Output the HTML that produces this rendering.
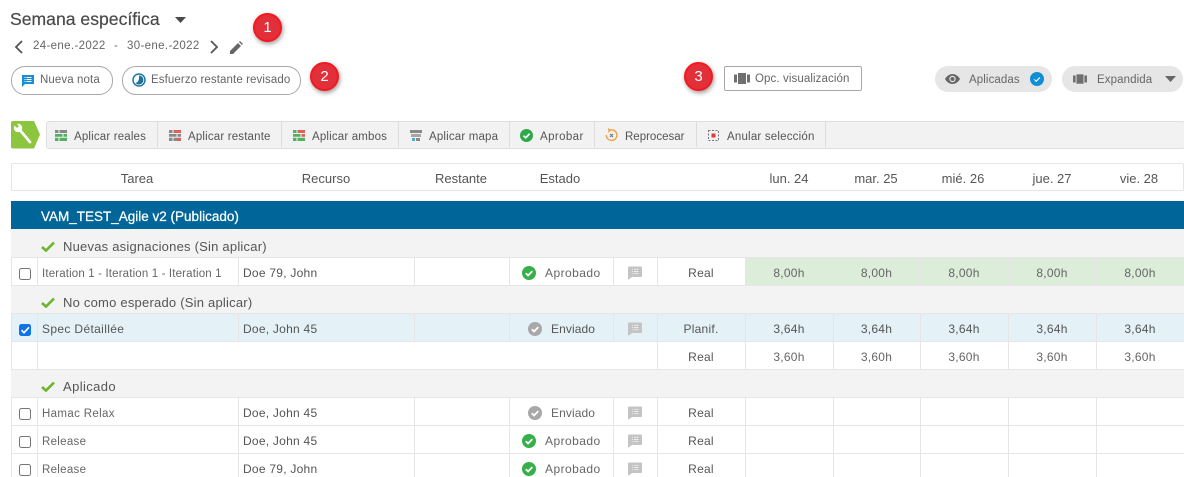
<!DOCTYPE html>
<html><head><meta charset="utf-8"><style>
html,body{margin:0;padding:0;background:#fff}
#p{position:relative;width:1184px;height:477px;overflow:hidden;font-family:"Liberation Sans",sans-serif;font-size:12px;color:#555;background:#fff}
#p div,#p svg{position:absolute}
.t{white-space:nowrap;line-height:14px}
.c{white-space:nowrap;line-height:14px;text-align:center}
.v{width:1px;background:#e6e6e6}
.h{height:1px;background:#e6e6e6;left:11px;width:1173px}
.g{left:11px;width:1173px;background:#f3f3f3}
.b{width:29px;height:29px;border-radius:50%;background:#e2303a;border:2px solid #f5181e;box-sizing:border-box;color:#fff;font-size:15px;line-height:25px;text-align:center;box-shadow:1px 2px 5px rgba(0,0,0,.4)}
.cb{left:19px;width:10px;height:10px;border:1px solid #767676;border-radius:2.5px;background:#fff}
.sep{top:122px;width:1px;height:25px;background:#dcdcdc}
.tb{top:130px;font-size:11.5px;letter-spacing:.17px;white-space:nowrap;line-height:14px}
.top{font-size:11.5px;color:#666;letter-spacing:.1px;white-space:nowrap;line-height:14px}
.hd{top:172px;width:100px;font-size:13px;text-align:center;white-space:nowrap;line-height:14px}
.gp{left:63px;font-size:13px;letter-spacing:.22px;white-space:nowrap;line-height:14px}
.task{left:42px;font-size:11.5px;letter-spacing:.15px;color:#666;white-space:nowrap;line-height:14px}
.res{left:243px;font-size:12px;letter-spacing:.25px;white-space:nowrap;line-height:14px;margin-top:-1px}
.st{font-size:12px;letter-spacing:.45px;color:#666;white-space:nowrap;line-height:14px;margin-top:-1px}
.n{font-size:12px;letter-spacing:.25px;text-align:center;white-space:nowrap;line-height:14px;margin-top:-1px}
.m{color:#666}
</style></head><body><div id="p">
<svg width="0" height="0" style="left:0;top:0"><defs>
<symbol id="ok" viewBox="0 0 14 14"><circle cx="7" cy="7" r="7"/><path d="M3.8 7.2l2.3 2.3 4.2-4.4" fill="none" stroke="#fff" stroke-width="1.8"/></symbol>
<symbol id="note" viewBox="0 0 14 14"><path d="M1 .5h12a1 1 0 0 1 1 1v8.500a1 1 0 0 1-1 1H4L1 13.500a1 1 0 0 1-1-1V1.500a1 1 0 0 1 1-1z" fill="#c4c4c4"/><path d="M4 3.300h1M6 3.300h4.500M4 5.500h1M6 5.500h4.500M4 7.700h1M6 7.700h4.500" stroke="#ececec" stroke-width=".9"/></symbol>
<symbol id="tick" viewBox="0 0 14 11"><path d="M1 6l4 3.600L13 1.500" fill="none" stroke="#6eb52f" stroke-width="2.600"/></symbol>
<symbol id="bars" viewBox="0 0 16 11"><rect x="0" y="1.500" width="3" height="8" fill="#707070"/><rect x="4" y="0" width="8" height="11" fill="#707070"/><rect x="13" y="1.500" width="3" height="8" fill="#707070"/></symbol>
</defs></svg>

<div class="t" style="left:10px;top:9px;font-size:17.6px;line-height:20px;color:#4a4a4a;-webkit-text-stroke:.2px #4a4a4a">Semana específica</div>
<svg style="left:175px;top:17px" width="11" height="6"><path d="M0 0h11L5.500 6z" fill="#4a4a4a"/></svg>
<svg style="left:14px;top:40px" width="10" height="14"><path d="M8 1L2 7l6 6" fill="none" stroke="#555" stroke-width="1.800"/></svg>
<div class="top" style="left:33px;top:39px;letter-spacing:.35px">24-ene.-2022</div>
<div class="top" style="left:114px;top:39px">-</div>
<div class="top" style="left:127px;top:39px;letter-spacing:.35px">30-ene.-2022</div>
<svg style="left:209px;top:40px" width="10" height="14"><path d="M2 1l6 6-6 6" fill="none" stroke="#555" stroke-width="1.800"/></svg>
<svg style="left:230px;top:41px" width="13" height="13" viewBox="0 0 13 13"><path d="M0 13V10L8 2l3 3-8 8zM9 1l1-1 3 3-1 1z" fill="#666"/></svg>

<div class="b" style="left:253px;top:13px">1</div>
<div class="b" style="left:310px;top:62px">2</div>
<div class="b" style="left:684px;top:62px">3</div>

<div style="left:11px;top:66px;width:100px;height:27px;border:1px solid #a9a9a9;border-radius:14px"></div>
<svg style="left:22px;top:75px" width="12" height="12" viewBox="0 0 12 12"><path d="M0 0h12v9H3l-3 3z" fill="#1b8fd2"/><path d="M2.500 2.500h1M4.500 2.500h5M2.500 4.500h1M4.500 4.500h5M2.500 6.500h1M4.500 6.500h5" stroke="#fff"/></svg>
<div class="top" style="left:40px;top:73px">Nueva nota</div>

<div style="left:122px;top:66px;width:177px;height:27px;border:1px solid #a9a9a9;border-radius:14px"></div>
<svg style="left:132px;top:73px" width="14" height="14" viewBox="0 0 14 14"><circle cx="7" cy="7" r="6" fill="#fff" stroke="#1f78a8" stroke-width="1.500"/><path d="M7 2.500A4.500 4.500 0 1 1 3.500 10C6 9.500 7.500 7 7 2.500z" fill="#1f6f9e"/></svg>
<div class="top" style="left:151px;top:73px">Esfuerzo restante revisado</div>

<div style="left:724px;top:66px;width:136px;height:23px;border:1px solid #a9a9a9;border-radius:2px"></div>
<svg style="left:734px;top:73px" width="16" height="11"><use href="#bars"/></svg>
<div class="top" style="left:755px;top:72px">Opc. visualización</div>

<div style="left:935px;top:66px;width:117px;height:26px;background:#e6e6e6;border-radius:13px"></div>
<svg style="left:945px;top:74px" width="15" height="10" viewBox="0 0 15 10"><path d="M0 5C2 1.500 5 0 7.500 0S13 1.500 15 5c-2 3.500-5 5-7.500 5S2 8.500 0 5z" fill="#666"/><circle cx="7.500" cy="5" r="3.200" fill="#e6e6e6"/><circle cx="7.500" cy="5" r="2" fill="#666"/></svg>
<div class="top" style="left:969px;top:73px">Aplicadas</div>
<svg style="left:1030px;top:72px" width="14" height="14" viewBox="0 0 14 14"><circle cx="7" cy="7" r="7" fill="#0f8fd3"/><path d="M4.300 7.500l2 1.800 3.500-3.800" fill="none" stroke="#fff" stroke-width="1.100"/></svg>

<div style="left:1062px;top:66px;width:121px;height:26px;background:#e6e6e6;border-radius:13px"></div>
<svg style="left:1073px;top:74px" width="14" height="10" viewBox="0 0 16 11"><use href="#bars"/></svg>
<div class="top" style="left:1097px;top:73px">Expandida</div>
<svg style="left:1165px;top:76px" width="11" height="6"><path d="M0 0h11L5.500 6z" fill="#666"/></svg>

<svg style="left:11px;top:121px" width="30" height="28" viewBox="0 0 30 28"><path d="M2 0H23L29 13.500 23 27.500H2a2 2 0 0 1-2-2V2a2 2 0 0 1 2-2z" fill="#8cc63f"/><path d="M8 8L19 21" stroke="#fff" stroke-width="2.800" stroke-linecap="round"/><circle cx="7" cy="7" r="4.200" fill="#fff"/><path d="M5 2L8 5 6 7 3 4z" fill="#8cc63f"/></svg>
<div style="left:46px;top:121px;width:1137px;height:26px;background:#f2f2f2;border:1px solid #dedede;border-radius:3px"></div>
<div class="sep" style="left:157px"></div><div class="sep" style="left:281px"></div><div class="sep" style="left:398px"></div><div class="sep" style="left:509px"></div><div class="sep" style="left:594px"></div><div class="sep" style="left:696px"></div><div class="sep" style="left:825px"></div>

<svg style="left:55px;top:130px" width="12" height="11" opacity=".85"><rect width="12" height="4" fill="#777"/><rect y="4" width="12" height="7" fill="#38a54a"/><path d="M0 3.500h12M0 7.300h12M4 0v3.500M8 3.500v4M4 7.300V11" stroke="#f2f2f2"/></svg>
<div class="tb" style="left:74px">Aplicar reales</div>
<svg style="left:169px;top:130px" width="12" height="11" opacity=".85"><rect width="12" height="11" fill="#777"/><rect x="4" width="8" height="4" fill="#e0473a"/><rect x="8" y="7" width="4" height="4" fill="#e0473a"/><path d="M0 3.500h12M0 7.300h12M4 0v3.500M8 3.500v4M4 7.300V11" stroke="#f2f2f2"/></svg>
<div class="tb" style="left:188px">Aplicar restante</div>
<svg style="left:293px;top:130px" width="12" height="11" opacity=".85"><rect width="12" height="11" fill="#38a54a"/><rect x="4" width="8" height="4" fill="#e0473a"/><rect x="8" y="4" width="4" height="3.500" fill="#e0473a"/><path d="M0 3.500h12M0 7.300h12M4 0v3.500M8 3.500v4M4 7.300V11" stroke="#f2f2f2"/></svg>
<div class="tb" style="left:312px">Aplicar ambos</div>
<svg style="left:410px;top:130px" width="12" height="11" opacity=".85"><rect width="12" height="3" fill="#777"/><rect x="1" y="4" width="10" height="3" fill="#999"/><rect x="2" y="8" width="3" height="3" fill="#2f9fd0"/><rect x="6" y="8" width="4" height="3" fill="#777"/></svg>
<div class="tb" style="left:429px">Aplicar mapa</div>
<svg style="left:520px;top:129px" width="13" height="13" fill="#2da84a"><use href="#ok"/></svg>
<div class="tb" style="left:540px;letter-spacing:.4px">Aprobar</div>
<svg style="left:605px;top:128px" width="13" height="14" viewBox="0 0 13 14"><path d="M4 2.500A5.300 5.300 0 1 1 1.300 7" fill="none" stroke="#f0a040" stroke-width="1.400"/><path d="M3 0l3.200 2L3.500 5z" fill="#f0a040"/><path d="M5 6l3 3M8 6L5 9" stroke="#777" stroke-width="1.200"/></svg>
<div class="tb" style="left:625px;letter-spacing:0">Reprocesar</div>
<svg style="left:708px;top:130px" width="11" height="11"><rect x=".5" y=".5" width="10" height="10" fill="none" stroke="#777" stroke-dasharray="2 1.500"/><rect x="3.500" y="3.500" width="4" height="4" fill="#dc3c3c"/></svg>
<div class="tb" style="left:727px;letter-spacing:.2px">Anular selección</div>

<div style="left:11px;top:163px;width:1171px;height:26px;border:1px solid #e6e6e6;border-radius:2px"></div>
<div class="hd" style="left:87px">Tarea</div>
<div class="hd" style="left:276px">Recurso</div>
<div class="hd" style="left:411px">Restante</div>
<div class="hd" style="left:510px">Estado</div>
<div class="hd" style="left:739px">lun. 24</div>
<div class="hd" style="left:826px">mar. 25</div>
<div class="hd" style="left:913px">mié. 26</div>
<div class="hd" style="left:1002px">jue. 27</div>
<div class="hd" style="left:1089px">vie. 28</div>

<div style="left:11px;top:201px;width:1173px;height:28px;background:#006699"></div>
<div class="t" style="left:41px;top:210px;color:#fff;font-size:13.5px;-webkit-text-stroke:.25px #fff">VAM_TEST_Agile v2 (Publicado)</div>

<div class="g" style="top:229px;height:28px"></div>
<div class="g" style="top:286px;height:27px"></div>
<div class="g" style="top:370px;height:27px"></div>
<div style="left:11px;top:314px;width:1173px;height:27px;background:#e4f1f7"></div>
<div style="left:745px;top:258px;width:439px;height:27px;background:#dcedda"></div>

<div class="h" style="top:257px"></div><div class="h" style="top:285px"></div><div class="h" style="top:313px"></div><div class="h" style="top:341px"></div><div class="h" style="top:369px"></div><div class="h" style="top:397px"></div><div class="h" style="top:425px"></div><div class="h" style="top:453px"></div>

<div class="v" style="left:11px;top:258px;height:27px"></div><div class="v" style="left:37px;top:258px;height:27px"></div><div class="v" style="left:238px;top:258px;height:27px"></div><div class="v" style="left:414px;top:258px;height:27px"></div><div class="v" style="left:509px;top:258px;height:27px"></div><div class="v" style="left:613px;top:258px;height:27px"></div><div class="v" style="left:657px;top:258px;height:27px"></div><div class="v" style="left:745px;top:258px;height:27px"></div><div class="v" style="left:833px;top:258px;height:27px"></div><div class="v" style="left:920px;top:258px;height:27px"></div><div class="v" style="left:1008px;top:258px;height:27px"></div><div class="v" style="left:1096px;top:258px;height:27px"></div>

<div class="v" style="left:11px;top:314px;height:27px"></div><div class="v" style="left:37px;top:314px;height:27px"></div><div class="v" style="left:238px;top:314px;height:27px"></div><div class="v" style="left:414px;top:314px;height:27px"></div><div class="v" style="left:509px;top:314px;height:27px"></div><div class="v" style="left:613px;top:314px;height:27px"></div><div class="v" style="left:657px;top:314px;height:27px"></div><div class="v" style="left:745px;top:314px;height:27px"></div><div class="v" style="left:833px;top:314px;height:27px"></div><div class="v" style="left:920px;top:314px;height:27px"></div><div class="v" style="left:1008px;top:314px;height:27px"></div><div class="v" style="left:1096px;top:314px;height:27px"></div>

<div class="v" style="left:11px;top:342px;height:27px"></div><div class="v" style="left:37px;top:342px;height:27px"></div><div class="v" style="left:657px;top:342px;height:27px"></div><div class="v" style="left:745px;top:342px;height:27px"></div><div class="v" style="left:833px;top:342px;height:27px"></div><div class="v" style="left:920px;top:342px;height:27px"></div><div class="v" style="left:1008px;top:342px;height:27px"></div><div class="v" style="left:1096px;top:342px;height:27px"></div>

<div class="v" style="left:11px;top:398px;height:79px"></div><div class="v" style="left:37px;top:398px;height:79px"></div><div class="v" style="left:238px;top:398px;height:79px"></div><div class="v" style="left:414px;top:398px;height:79px"></div><div class="v" style="left:509px;top:398px;height:79px"></div><div class="v" style="left:613px;top:398px;height:79px"></div><div class="v" style="left:657px;top:398px;height:79px"></div><div class="v" style="left:745px;top:398px;height:79px"></div><div class="v" style="left:833px;top:398px;height:79px"></div><div class="v" style="left:920px;top:398px;height:79px"></div><div class="v" style="left:1008px;top:398px;height:79px"></div><div class="v" style="left:1096px;top:398px;height:79px"></div>

<svg style="left:41px;top:241px" width="14" height="11"><use href="#tick"/></svg>
<div class="gp" style="top:240px">Nuevas asignaciones (Sin aplicar)</div>
<svg style="left:41px;top:297px" width="14" height="11"><use href="#tick"/></svg>
<div class="gp" style="top:296px">No como esperado (Sin aplicar)</div>
<svg style="left:41px;top:381px" width="14" height="11"><use href="#tick"/></svg>
<div class="gp" style="top:380px;letter-spacing:.4px">Aplicado</div>

<!-- Row 1 -->
<div class="cb" style="top:268px"></div>
<div class="task" style="top:267px">Iteration 1 - Iteration 1 - Iteration 1</div>
<div class="res" style="top:267px">Doe 79, John</div>
<svg style="left:522px;top:266px" width="14" height="14" fill="#38b04a"><use href="#ok"/></svg>
<div class="st" style="left:545px;top:267px">Aprobado</div>
<svg style="left:628px;top:266px" width="14" height="14"><use href="#note"/></svg>
<div class="n" style="left:657px;width:88px;top:267px">Real</div>
<div class="n m" style="left:745px;width:88px;top:267px">8,00h</div>
<div class="n m" style="left:833px;width:87px;top:267px">8,00h</div>
<div class="n m" style="left:920px;width:88px;top:267px">8,00h</div>
<div class="n m" style="left:1008px;width:88px;top:267px">8,00h</div>
<div class="n m" style="left:1096px;width:88px;top:267px">8,00h</div>

<!-- Row 2 -->
<div class="cb" style="top:324px;background:#0f74e8;border-color:#0f74e8"></div>
<svg style="left:19px;top:324px" width="12" height="12"><path d="M2.500 6.200l2.500 2.500L10 3.300" fill="none" stroke="#fff" stroke-width="1.700"/></svg>
<div class="task" style="top:322px;font-size:12px;letter-spacing:.35px;color:#555">Spec Détaillée</div>
<div class="res" style="top:323px">Doe, John 45</div>
<svg style="left:528px;top:322px" width="14" height="14" fill="#a8a8a8"><use href="#ok"/></svg>
<div class="st" style="left:551px;top:323px;letter-spacing:.1px;color:#555">Enviado</div>
<svg style="left:628px;top:322px" width="14" height="14"><use href="#note"/></svg>
<div class="n" style="left:657px;width:88px;top:323px">Planif.</div>
<div class="n" style="left:745px;width:88px;top:323px">3,64h</div>
<div class="n" style="left:833px;width:87px;top:323px">3,64h</div>
<div class="n" style="left:920px;width:88px;top:323px">3,64h</div>
<div class="n" style="left:1008px;width:88px;top:323px">3,64h</div>
<div class="n" style="left:1096px;width:88px;top:323px">3,64h</div>

<!-- Row 3 -->
<div class="n" style="left:657px;width:88px;top:351px">Real</div>
<div class="n m" style="left:745px;width:88px;top:351px">3,60h</div>
<div class="n m" style="left:833px;width:87px;top:351px">3,60h</div>
<div class="n m" style="left:920px;width:88px;top:351px">3,60h</div>
<div class="n m" style="left:1008px;width:88px;top:351px">3,60h</div>
<div class="n m" style="left:1096px;width:88px;top:351px">3,60h</div>

<!-- Row 4 -->
<div class="cb" style="top:408px"></div>
<div class="task" style="top:407px;letter-spacing:.35px">Hamac Relax</div>
<div class="res" style="top:407px">Doe, John 45</div>
<svg style="left:528px;top:406px" width="14" height="14" fill="#a8a8a8"><use href="#ok"/></svg>
<div class="st" style="left:551px;top:407px;letter-spacing:.1px">Enviado</div>
<svg style="left:628px;top:406px" width="14" height="14"><use href="#note"/></svg>
<div class="n" style="left:657px;width:88px;top:407px">Real</div>

<!-- Row 5 -->
<div class="cb" style="top:436px"></div>
<div class="task" style="top:435px;letter-spacing:.3px">Release</div>
<div class="res" style="top:435px">Doe, John 45</div>
<svg style="left:522px;top:434px" width="14" height="14" fill="#38b04a"><use href="#ok"/></svg>
<div class="st" style="left:545px;top:435px">Aprobado</div>
<svg style="left:628px;top:434px" width="14" height="14"><use href="#note"/></svg>
<div class="n" style="left:657px;width:88px;top:435px">Real</div>

<!-- Row 6 -->
<div class="cb" style="top:464px"></div>
<div class="task" style="top:463px;letter-spacing:.3px">Release</div>
<div class="res" style="top:463px">Doe 79, John</div>
<svg style="left:522px;top:462px" width="14" height="14" fill="#38b04a"><use href="#ok"/></svg>
<div class="st" style="left:545px;top:463px">Aprobado</div>
<svg style="left:628px;top:462px" width="14" height="14"><use href="#note"/></svg>
<div class="n" style="left:657px;width:88px;top:463px">Real</div>
</div></body></html>
